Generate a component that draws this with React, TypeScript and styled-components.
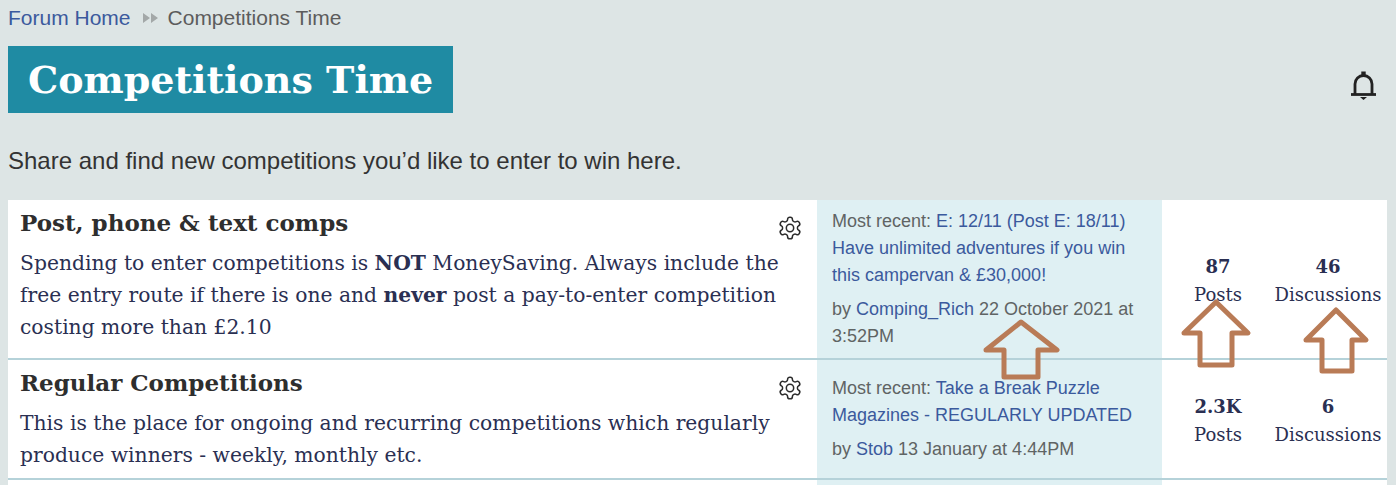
import React from "react";
import styled, { createGlobalStyle } from "styled-components";

const Global = createGlobalStyle`
  html, body { margin: 0; padding: 0; background: #dde5e5; overflow: hidden; }
`;
const sans = `"Liberation Sans", Arial, sans-serif`;
const slab = `"DejaVu Serif", "Liberation Serif", serif`;

const Page = styled.div`
  position: relative;
  width: 1396px;
  height: 485px;
  box-sizing: border-box;
  padding: 0 9px 0 8px;
  overflow: hidden;
  font-family: ${sans};
`;
const Crumbs = styled.nav`
  display: flex;
  align-items: center;
  height: 36px;
  font-size: 21px;
  color: #5c5c5c;
`;
const Link = styled.a`
  color: #3b5a9d;
  text-decoration: none;
`;
const CrumbSep = styled.svg`
  width: 16px;
  height: 10px;
  margin: 0 9px 0 12px;
  fill: #a3a8a8;
`;
const HeadRow = styled.div`
  display: flex;
  align-items: center;
  justify-content: space-between;
  margin-top: 10px;
`;
const Title = styled.h1`
  margin: 0;
  width: 445px;
  height: 67px;
  box-sizing: border-box;
  padding-left: 20px;
  background: #1f8ba3;
  color: #fff;
  font: 700 38px/67px ${slab};
  white-space: nowrap;
`;
const Bell = styled.svg`
  width: 30px;
  height: 30px;
  margin-right: 9px;
  margin-top: 11px;
`;
const Intro = styled.p`
  margin: 33px 0 0;
  height: 54px;
  font-size: 24px;
  line-height: 30px;
  color: #333;
`;
const Row = styled.section<{ $h: number }>`
  display: grid;
  grid-template-columns: 809px 345px 1fr;
  height: ${(p) => p.$h}px;
  background: #fff;
  border-bottom: 2px solid #b5d2d9;
`;
const Main = styled.div`
  position: relative;
  padding: 8px 12px 0;
`;
const RowTitle = styled.h2`
  margin: 0;
  font: 700 23px/30px ${slab};
  color: #2e2e2e;
`;
const Desc = styled.p`
  margin: 9px 0 0;
  font: 400 20.3px/32px ${slab};
  color: #2a2f52;
  b { font-weight: 700; }
`;
const Gear = styled.svg`
  position: absolute;
  top: 15px;
  right: 14px;
  width: 26px;
  height: 26px;
`;
const Recent = styled.div`
  display: flex;
  flex-direction: column;
  justify-content: center;
  background: #dff0f3;
  padding: 0 15px;
  font-size: 18px;
  line-height: 27px;
  color: #5f6464;
`;
const By = styled.div`
  margin-top: 7px;
`;
const Stats = styled.div`
  display: grid;
  grid-template-columns: 112px 108px;
  padding-top: 4px;
  justify-items: center;
  align-content: center;
`;
const Stat = styled.div`
  text-align: center;
  font-family: ${slab};
  color: #2a2f52;
`;
const Num = styled.div`
  font-size: 18px;
  font-weight: 700;
  line-height: 28px;
`;
const Label = styled.div`
  font-size: 18px;
  line-height: 28px;
  white-space: nowrap;
`;
const Arrow = styled.svg`
  position: absolute;
  left: 0;
  top: 0;
  width: 1396px;
  height: 485px;
  pointer-events: none;
  fill: none;
  stroke: #b97b56;
  stroke-width: 5;
  stroke-linejoin: round;
`;

const GearIcon = () => (
  <Gear viewBox="0 0 24 24" fill="none" stroke="#2b2b2b" strokeWidth="1.4" strokeLinecap="round" strokeLinejoin="round">
    <path d="M12.22 2h-.44a2 2 0 0 0-2 2v.18a2 2 0 0 1-1 1.73l-.43.25a2 2 0 0 1-2 0l-.15-.08a2 2 0 0 0-2.73.73l-.22.38a2 2 0 0 0 .73 2.73l.15.1a2 2 0 0 1 1 1.72v.51a2 2 0 0 1-1 1.74l-.15.09a2 2 0 0 0-.73 2.73l.22.38a2 2 0 0 0 2.73.73l.15-.08a2 2 0 0 1 2 0l.43.25a2 2 0 0 1 1 1.73V20a2 2 0 0 0 2 2h.44a2 2 0 0 0 2-2v-.18a2 2 0 0 1 1-1.73l.43-.25a2 2 0 0 1 2 0l.15.08a2 2 0 0 0 2.73-.73l.22-.39a2 2 0 0 0-.73-2.73l-.15-.08a2 2 0 0 1-1-1.74v-.5a2 2 0 0 1 1-1.74l.15-.09a2 2 0 0 0 .73-2.73l-.22-.38a2 2 0 0 0-2.73-.73l-.15.08a2 2 0 0 1-2 0l-.43-.25a2 2 0 0 1-1-1.73V4a2 2 0 0 0-2-2z" />
    <circle cx="12" cy="12" r="3.4" />
  </Gear>
);

export default function App() {
  return (
    <Page>
      <Global />
      <Crumbs>
        <Link href="#">Forum Home</Link>
        <CrumbSep viewBox="0 0 16 10">
          <path d="M0 0l7 5-7 5zM8 0l7 5-7 5z" />
        </CrumbSep>
        <span>Competitions Time</span>
      </Crumbs>
      <HeadRow>
        <Title>Competitions Time</Title>
        <Bell viewBox="0 0 30 30" fill="none" stroke="#222" strokeWidth="2.8">
          <path d="M7 24V14a8.5 8.5 0 0 1 17 0V24" />
          <path d="M3 24.5H28" />
          <path d="M15.5 1.5V6" strokeWidth="4.4" />
          <path d="M12 27H19L15.5 30Z" fill="#222" stroke="none" />
        </Bell>
      </HeadRow>
      <Intro>Share and find new competitions you’d like to enter to win here.</Intro>
      <Row $h={158}>
        <Main>
          <RowTitle>Post, phone &amp; text comps</RowTitle>
          <GearIcon />
          <Desc>
            Spending to enter competitions is <b>NOT</b> MoneySaving. Always include the free entry route if there is one and <b>never</b> post a pay-to-enter competition costing more than £2.10
          </Desc>
        </Main>
        <Recent>
          <div>Most recent: <Link href="#">E: 12/11 (Post E: 18/11) Have unlimited adventures if you win this campervan &amp; £30,000!</Link></div>
          <By>by <Link href="#">Comping_Rich</Link> 22 October 2021 at 3:52PM</By>
        </Recent>
        <Stats>
          <Stat><Num>87</Num><Label>Posts</Label></Stat>
          <Stat><Num>46</Num><Label>Discussions</Label></Stat>
        </Stats>
      </Row>
      <Row $h={118}>
        <Main>
          <RowTitle>Regular Competitions</RowTitle>
          <GearIcon />
          <Desc>
            This is the place for ongoing and recurring competitions which regularly produce winners - weekly, monthly etc.
          </Desc>
        </Main>
        <Recent>
          <div>Most recent: <Link href="#">Take a Break Puzzle Magazines - REGULARLY UPDATED</Link></div>
          <By>by <Link href="#">Stob</Link> 13 January at 4:44PM</By>
        </Recent>
        <Stats>
          <Stat><Num>2.3K</Num><Label>Posts</Label></Stat>
          <Stat><Num>6</Num><Label>Discussions</Label></Stat>
        </Stats>
      </Row>
      <Row $h={40}>
        <Main />
        <Recent />
        <div />
      </Row>
      <Arrow viewBox="0 0 1396 485">
        <path d="M1021 322L1057 350H1038V377H1004V350H986Z" />
        <path d="M1216 302L1248 333H1232V365H1200V333H1184Z" />
        <path d="M1336 310L1366 340H1352V371H1322V340H1306Z" />
      </Arrow>
    </Page>
  );
}
